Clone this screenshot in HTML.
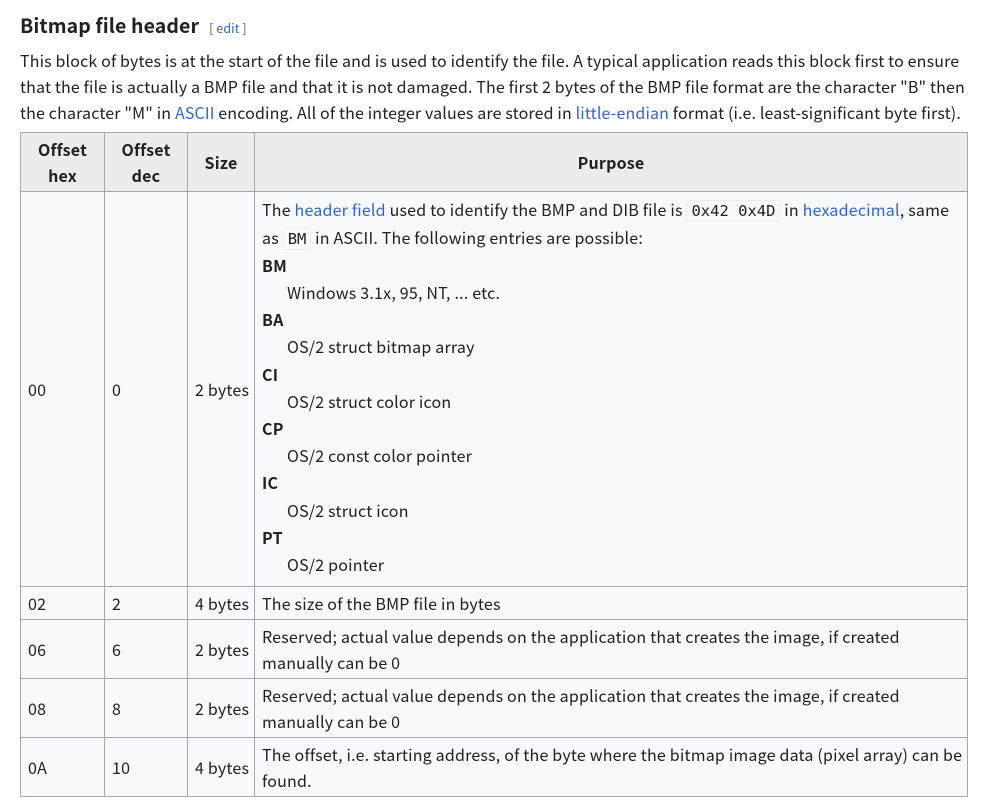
<!DOCTYPE html>
<html><head><meta charset="utf-8">
<style>
body{margin:0;background:#fff;color:#202122;font-family:"Noto Sans CJK SC","Liberation Sans",sans-serif;font-size:16px;letter-spacing:0.2px;}
.wrap{position:absolute;left:20px;top:0;width:948px;}
h3{margin:0;position:absolute;top:10px;left:0;font-size:19.5px;font-weight:700;line-height:30px;letter-spacing:0.1px;}
h3 .ed{font-size:12.5px;font-weight:400;color:#54595d;margin-left:10px;}
h3 .ed a{color:#3366cc;}
a{color:#3366cc;text-decoration:none;}
p{position:absolute;top:47px;left:0;margin:0;line-height:26px;width:960px;white-space:nowrap;letter-spacing:0.15px;}
table{position:absolute;top:132px;left:0;border-collapse:collapse;background:#f8f9fa;width:948px;line-height:26px;table-layout:fixed;}
th,td{border:1px solid #a2a9b1;padding:3px 7px;vertical-align:middle;text-align:left;}
td:nth-child(3){white-space:nowrap;}
td.nw{white-space:nowrap;overflow:hidden;}
th{background:#eaecf0;text-align:center;font-weight:700;}
code{font-family:"DejaVu Sans Mono","Liberation Mono",monospace;font-size:15.5px;letter-spacing:0;background:#f8f9fa;border:1px solid #eaecf0;border-radius:2px;padding:1px 4px;}
dl{margin:0;line-height:27.2px;}
dt{font-weight:700;}
dd{margin-left:25px;}
</style></head><body>
<div class="wrap">
<h3>Bitmap file header<span class="ed">[ <a>edit</a> ]</span></h3>
<p>This block of bytes is at the start of the file and is used to identify the file. A typical application reads this block first to ensure<br>that the file is actually a BMP file and that it is not damaged. The first 2 bytes of the BMP file format are the character "B" then<br>the character "M" in <a>ASCII</a> encoding. All of the integer values are stored in <a>little-endian</a> format (i.e. least-significant byte first).</p>
<table>
<colgroup><col style="width:84px"><col style="width:83px"><col style="width:67px"><col></colgroup>
<tr style="height:59px"><th>Offset hex</th><th>Offset dec</th><th>Size</th><th>Purpose</th></tr>
<tr style="height:395px"><td>00</td><td>0</td><td>2 bytes</td><td style="padding-top:2px;padding-bottom:6px">The <a>header field</a> used to identify the BMP and DIB file is <code>0x42 0x4D</code> in <a>hexadecimal</a>, same as <code>BM</code> in ASCII. The following entries are possible:
<dl><dt>BM</dt><dd>Windows 3.1x, 95, NT, ... etc.</dd><dt>BA</dt><dd>OS/2 struct bitmap array</dd><dt>CI</dt><dd>OS/2 struct color icon</dd><dt>CP</dt><dd>OS/2 const color pointer</dd><dt>IC</dt><dd>OS/2 struct icon</dd><dt>PT</dt><dd>OS/2 pointer</dd></dl></td></tr>
<tr style="height:33px"><td>02</td><td>2</td><td>4 bytes</td><td>The size of the BMP file in bytes</td></tr>
<tr style="height:58px"><td>06</td><td>6</td><td>2 bytes</td><td class="nw">Reserved; actual value depends on the application that creates the image, if created<br>manually can be 0</td></tr>
<tr style="height:59px"><td>08</td><td>8</td><td>2 bytes</td><td class="nw">Reserved; actual value depends on the application that creates the image, if created<br>manually can be 0</td></tr>
<tr style="height:58px"><td>0A</td><td>10</td><td>4 bytes</td><td class="nw">The offset, i.e. starting address, of the byte where the bitmap image data (pixel array) can be<br>found.</td></tr>
</table>
</div>
</body></html>
